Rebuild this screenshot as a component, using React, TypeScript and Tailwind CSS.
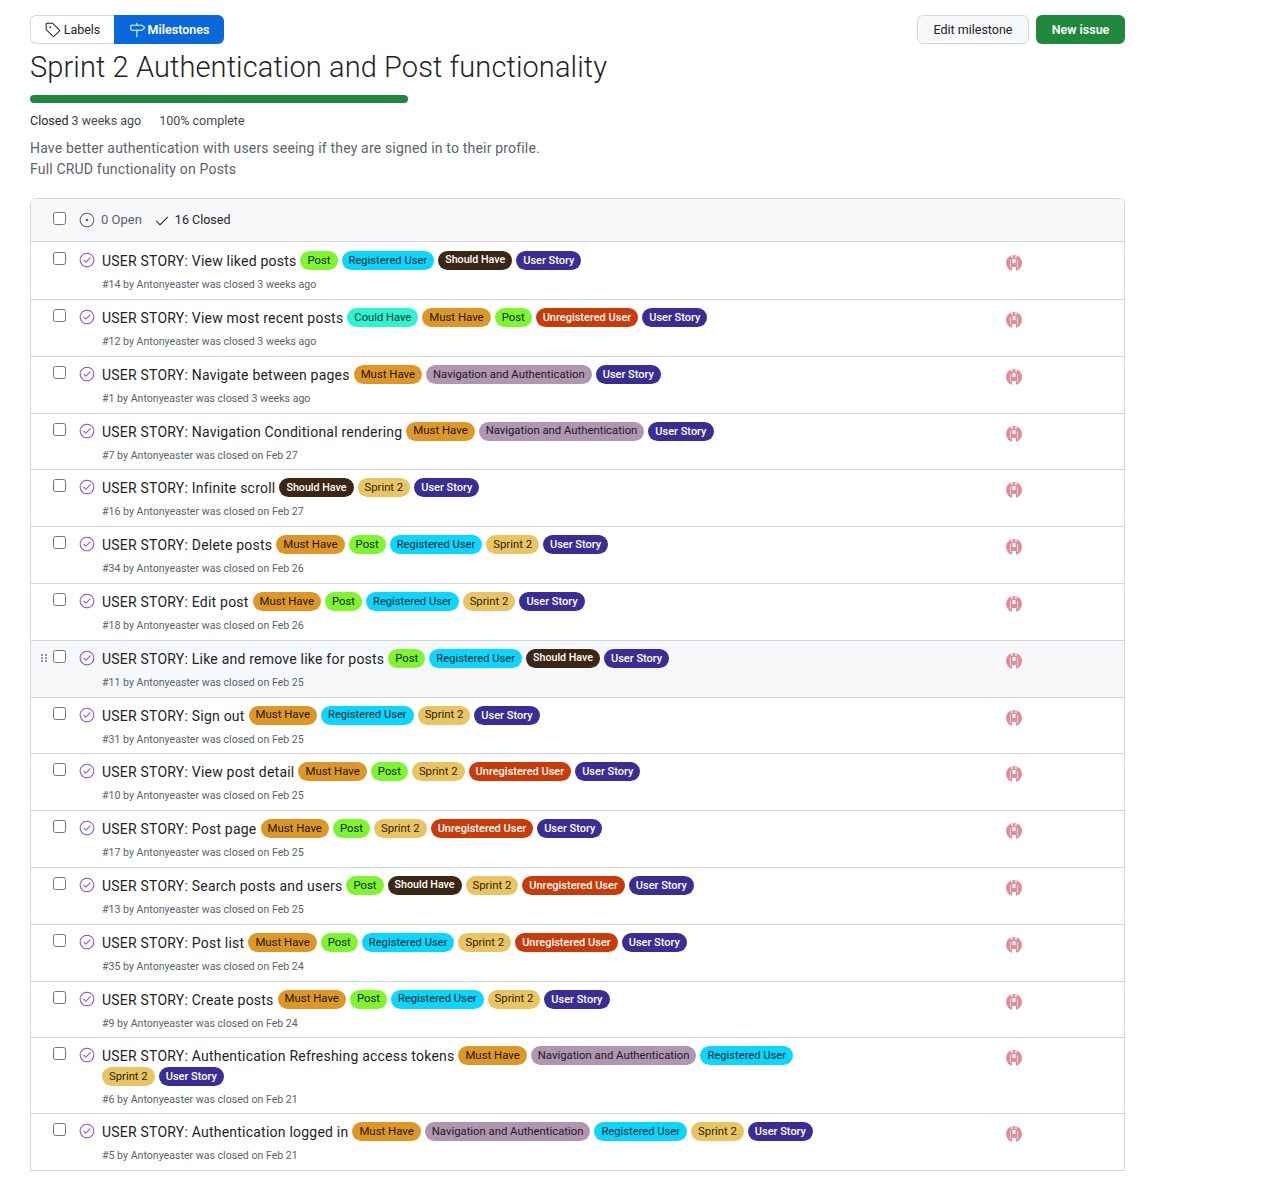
import React from 'react';
import { GoTag, GoMilestone, GoIssueOpened, GoCheck, GoCheckCircle } from 'react-icons/go';

const LABEL_STYLES: Record<string, string> = {
  Post: 'bg-[#7ef52f] text-[#10240a] text-[11.3px]',
  'Registered User': 'bg-[#0bd6ff] text-[#04262e] text-[11.2px]',
  'Should Have': 'bg-[#3b2714] text-white text-[10.7px] font-medium',
  'User Story': 'bg-[#3a2d94] text-white text-[11px] font-medium',
  'Could Have': 'bg-[#2df5d2] text-[#05302a] text-[11.2px]',
  'Must Have': 'bg-[#de9726] text-[#231703] text-[11.4px]',
  'Unregistered User': 'bg-[#c93b08] text-white text-[11px] font-medium',
  'Sprint 2': 'bg-[#e9c463] text-[#2b2205] text-[11.3px]',
  'Navigation and Authentication': 'bg-[#b096b0] text-[#221a22] text-[11.3px]',
};

type Issue = { title: string; labels: string[]; meta: string; hovered?: boolean; tall?: boolean };

const ISSUES: Issue[] = [
  { title: 'View liked posts', labels: ['Post', 'Registered User', 'Should Have', 'User Story'], meta: '#14 by Antonyeaster was closed 3 weeks ago' },
  { title: 'View most recent posts', labels: ['Could Have', 'Must Have', 'Post', 'Unregistered User', 'User Story'], meta: '#12 by Antonyeaster was closed 3 weeks ago' },
  { title: 'Navigate between pages', labels: ['Must Have', 'Navigation and Authentication', 'User Story'], meta: '#1 by Antonyeaster was closed 3 weeks ago' },
  { title: 'Navigation Conditional rendering', labels: ['Must Have', 'Navigation and Authentication', 'User Story'], meta: '#7 by Antonyeaster was closed on Feb 27' },
  { title: 'Infinite scroll', labels: ['Should Have', 'Sprint 2', 'User Story'], meta: '#16 by Antonyeaster was closed on Feb 27' },
  { title: 'Delete posts', labels: ['Must Have', 'Post', 'Registered User', 'Sprint 2', 'User Story'], meta: '#34 by Antonyeaster was closed on Feb 26' },
  { title: 'Edit post', labels: ['Must Have', 'Post', 'Registered User', 'Sprint 2', 'User Story'], meta: '#18 by Antonyeaster was closed on Feb 26' },
  { title: 'Like and remove like for posts', labels: ['Post', 'Registered User', 'Should Have', 'User Story'], meta: '#11 by Antonyeaster was closed on Feb 25', hovered: true },
  { title: 'Sign out', labels: ['Must Have', 'Registered User', 'Sprint 2', 'User Story'], meta: '#31 by Antonyeaster was closed on Feb 25' },
  { title: 'View post detail', labels: ['Must Have', 'Post', 'Sprint 2', 'Unregistered User', 'User Story'], meta: '#10 by Antonyeaster was closed on Feb 25' },
  { title: 'Post page', labels: ['Must Have', 'Post', 'Sprint 2', 'Unregistered User', 'User Story'], meta: '#17 by Antonyeaster was closed on Feb 25' },
  { title: 'Search posts and users', labels: ['Post', 'Should Have', 'Sprint 2', 'Unregistered User', 'User Story'], meta: '#13 by Antonyeaster was closed on Feb 25' },
  { title: 'Post list', labels: ['Must Have', 'Post', 'Registered User', 'Sprint 2', 'Unregistered User', 'User Story'], meta: '#35 by Antonyeaster was closed on Feb 24' },
  { title: 'Create posts', labels: ['Must Have', 'Post', 'Registered User', 'Sprint 2', 'User Story'], meta: '#9 by Antonyeaster was closed on Feb 24' },
  { title: 'Authentication Refreshing access tokens', labels: ['Must Have', 'Navigation and Authentication', 'Registered User', 'Sprint 2', 'User Story'], meta: '#6 by Antonyeaster was closed on Feb 21', tall: true },
  { title: 'Authentication logged in', labels: ['Must Have', 'Navigation and Authentication', 'Registered User', 'Sprint 2', 'User Story'], meta: '#5 by Antonyeaster was closed on Feb 21' },
];

const Checkbox: React.FC = () => (
  <span className="block w-[13px] h-[13px] rounded-[2.5px] border border-[#767676] bg-white" />
);

const Avatar: React.FC = () => (
  <svg width="16" height="16" viewBox="0 0 16 16">
    <circle cx="8" cy="8" r="8" fill="#e08d9b" />
    <rect x="5" y="0" width="2" height="3" fill="#f3d3d9" />
    <rect x="9" y="0" width="2" height="3" fill="#f3d3d9" />
    <rect x="6.5" y="4" width="3" height="4" fill="#ffffff" />
    <rect x="6" y="12" width="4" height="4" fill="#ffffff" />
    <rect x="4" y="5" width="1" height="8" fill="#f3d3d9" />
    <rect x="11" y="5" width="1" height="8" fill="#f3d3d9" />
  </svg>
);

const Grabber: React.FC = () => (
  <svg width="6" height="8" viewBox="0 0 6 8" fill="#8c959f">
    <rect x="0" y="0" width="2" height="2" />
    <rect x="4" y="0" width="2" height="2" />
    <rect x="0" y="3" width="2" height="2" />
    <rect x="4" y="3" width="2" height="2" />
    <rect x="0" y="6" width="2" height="2" />
    <rect x="4" y="6" width="2" height="2" />
  </svg>
);

const IssueLabel: React.FC<{ name: string }> = ({ name }) => (
  <span className={`inline-flex items-center h-[19px] mt-[1px] px-[7px] rounded-full whitespace-nowrap leading-none ${LABEL_STYLES[name]}`}>
    {name}
  </span>
);

const IssueRow: React.FC<{ issue: Issue; first: boolean }> = ({ issue, first }) => (
  <div className={`relative flex border-t border-[#d1d9e0] ${first ? 'pt-[8px] h-[58px]' : issue.tall ? 'pt-[7px] h-[76px]' : 'pt-[7px] h-[56.8px]'} ${issue.hovered ? 'bg-[#f6f8fa]' : 'bg-white'}`}>
    {issue.hovered && (
      <span className="absolute left-[10px] top-[13px]">
        <Grabber />
      </span>
    )}
    <div className="w-[48px] pl-[22px] pt-[2px] shrink-0">
      <Checkbox />
    </div>
    <div className="w-[23px] pt-[2px] shrink-0 text-[#8250df]">
      <GoCheckCircle size={16} />
    </div>
    <div className="w-[900px] shrink-0">
      <div className="flex flex-wrap items-start gap-x-[4px] w-[720px]">
        <span className="h-[21px] pt-[1px] text-[14px] font-[450] text-[#1f2328] tracking-[0.22px] leading-[21px]">USER STORY: {issue.title}</span>
        {issue.labels.map((name) => (
          <IssueLabel key={name} name={name} />
        ))}
      </div>
      <div className="text-[10.6px] text-[#59636e] mt-[6px] leading-[16px]">{issue.meta}</div>
    </div>
    <div className="pt-[5px] pl-[4px]">
      <Avatar />
    </div>
  </div>
);

export default function App() {
  return (
    <div className="bg-white min-h-[1184px] px-[30px] pt-[15px] text-[#1f2328] font-['Roboto',sans-serif]">
      <div className="w-[1095px]">
        <div className="flex items-center justify-between">
          <div className="flex h-[29px] text-[12.5px]">
            <span className="flex items-center gap-[3px] pt-px w-[84px] justify-center border border-r-0 border-[#d1d9e0] rounded-l-md">
              <GoTag size={16} />
              Labels
            </span>
            <span className="flex items-center gap-[3px] pt-px w-[110px] justify-center bg-[#0969da] text-white font-semibold rounded-r-md">
              <GoMilestone size={16} />
              Milestones
            </span>
          </div>
          <div className="flex gap-[7px] text-[12.5px]">
            <span className="flex items-center justify-center pt-px w-[112px] h-[29px] bg-[#f6f8fa] border border-[#d1d9e0] rounded-md">Edit milestone</span>
            <span className="flex items-center justify-center pt-px w-[89px] h-[29px] bg-[#1f883d] text-white font-semibold rounded-md">New issue</span>
          </div>
        </div>
        <h1 className="text-[29px] leading-[44px] mt-[1px] tracking-[0.1px] font-[350]">Sprint 2 Authentication and Post functionality</h1>
        <div className="w-[378px] h-[8px] mt-[6px] rounded-full bg-[#1f883d]" />
        <div className="flex gap-[18px] text-[12.5px] mt-[9px] leading-[18px]">
          <span>
            <span className="font-[450]">Closed</span> <span className="text-[#424a53]">3 weeks ago</span>
          </span>
          <span className="text-[#424a53]">100% complete</span>
        </div>
        <div className="mt-[8px] text-[14px] leading-[21px] text-[#59636e] tracking-[0.18px]">
          <p>Have better authentication with users seeing if they are signed in to their profile.</p>
          <p>Full CRUD functionality on Posts</p>
        </div>
        <div className="mt-[18px] border border-[#d1d9e0] rounded-t-md overflow-hidden">
          <div className="flex items-center h-[42px] bg-[#f6f8fa]">
            <div className="w-[48px] pl-[22px] pb-[4px] shrink-0">
              <Checkbox />
            </div>
            <span className="flex items-center gap-[6px] text-[13px] text-[#59636e]">
              <GoIssueOpened size={16} />
              0 Open
            </span>
            <span className="flex items-center gap-[5px] ml-[12px] mt-px text-[12.5px] font-[450]">
              <GoCheck size={16} />
              16 Closed
            </span>
          </div>
          {ISSUES.map((issue, index) => (
            <IssueRow key={issue.meta} issue={issue} first={index === 0} />
          ))}
        </div>
      </div>
    </div>
  );
}
